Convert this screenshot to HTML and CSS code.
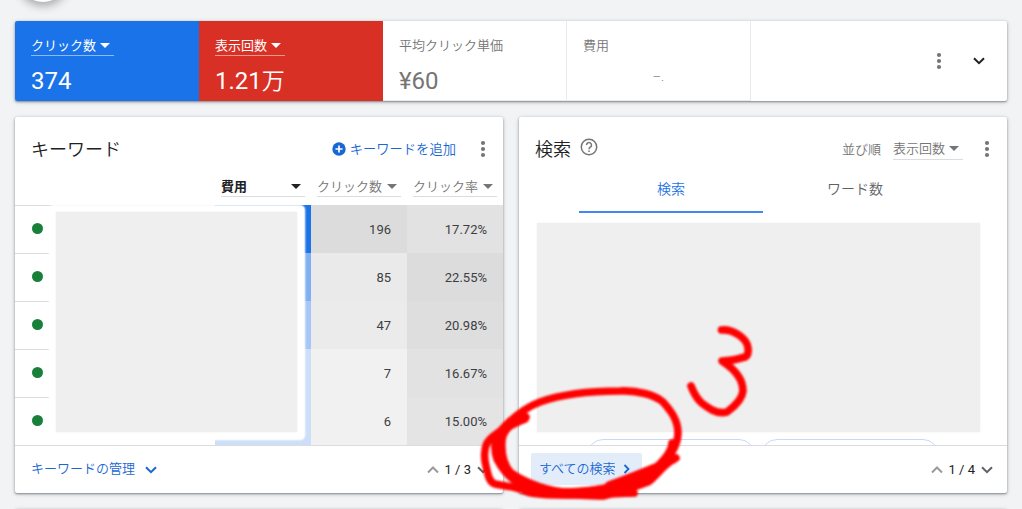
FILE: index.html
```html
<!DOCTYPE html>
<html lang="ja">
<head>
<meta charset="utf-8">
<title>キーワード</title>
<link rel="stylesheet" href="styles.css">
</head>
<body>
<svg class="defs" width="0" height="0">
  <symbol id="dots" viewBox="0 0 6 18"><circle cx="3" cy="3" r="2.1"/><circle cx="3" cy="9" r="2.1"/><circle cx="3" cy="15" r="2.1"/></symbol>
  <symbol id="down" viewBox="0 0 12 8"><path d="M1 1.2 6 6.2 11 1.2"/></symbol>
  <symbol id="up" viewBox="0 0 12 8"><path d="M1 6.5 6 1.5 11 6.5"/></symbol>
</svg>
<div class="page">
  <div class="fab"></div>
  <section class="summary">
    <div class="metric blue"><span class="label drop">クリック数<i class="tri"></i></span><span class="value">374</span></div>
    <div class="metric red"><span class="label drop">表示回数<i class="tri"></i></span><span class="value">1.21<span class="man">万</span></span></div>
    <div class="metric plain"><span class="label">平均クリック単価</span><span class="value">¥60</span></div>
    <div class="metric plain"><span class="label">費用</span><span class="dash">–.</span></div>
    <div class="tools"><svg class="dots"><use href="#dots"/></svg><svg class="chev dark"><use href="#down"/></svg></div>
  </section>
  <main class="cards">
    <section class="card">
      <header class="head">
        <h2 class="title">キーワード</h2>
        <a class="add"><svg class="plus" viewBox="0 0 14 14"><circle cx="7" cy="7" r="6.7"/><path d="M7 3.5v7M3.5 7h7"/></svg>キーワードを追加</a>
        <svg class="dots"><use href="#dots"/></svg>
      </header>
      <div class="cols">
        <span class="col strong">費用<i class="tri"></i></span>
        <span class="col">クリック数<i class="tri"></i></span>
        <span class="col">クリック率<i class="tri"></i></span>
      </div>
      <div class="table">
        <div class="row"><div class="status"><i></i></div><div class="c1"></div><div class="num a1">196</div><div class="num b1">17.72%</div></div>
        <div class="row"><div class="status"><i></i></div><div class="c2"></div><div class="num a2">85</div><div class="num b2">22.55%</div></div>
        <div class="row"><div class="status"><i></i></div><div class="c3"></div><div class="num a3">47</div><div class="num b3">20.98%</div></div>
        <div class="row"><div class="status"><i></i></div><div class="c4"></div><div class="num a4">7</div><div class="num b4">16.67%</div></div>
        <div class="row"><div class="status"><i></i></div><div class="c4"></div><div class="num a4">6</div><div class="num b5">15.00%</div></div>
        <div class="halo"></div>
        <div class="mask"></div>
      </div>
      <footer class="foot">
        <a class="manage">キーワードの管理<svg class="chev link"><use href="#down"/></svg></a>
        <div class="pager"><svg class="chev dim"><use href="#up"/></svg><span>1 / 3</span><svg class="chev mid"><use href="#down"/></svg></div>
      </footer>
    </section>
    <section class="card">
      <header class="head">
        <h2 class="title">検索</h2>
        <svg class="help" viewBox="0 0 18 18"><circle cx="9" cy="9" r="7.7"/><path d="M6.5 7.1a2.5 2.5 0 1 1 3.8 2.1C9.4 9.8 9 10.200 9 11.300M9 12.500v1.500"/></svg>
        <span class="order">並び順</span>
        <span class="col sort">表示回数<i class="tri"></i></span>
        <svg class="dots"><use href="#dots"/></svg>
      </header>
      <nav class="tabs"><a class="tab on">検索</a><a class="tab">ワード数</a></nav>
      <div class="cloud">
        <div class="blank"></div>
        <div class="pills"><i class="pill first"></i><i class="pill"></i></div>
      </div>
      <footer class="foot">
        <a class="all">すべての検索<svg class="next" viewBox="0 0 8 12"><path d="M1.500 2 5.500 6l-4 4"/></svg></a>
        <div class="pager"><svg class="chev dim"><use href="#up"/></svg><span>1 / 4</span><svg class="chev mid"><use href="#down"/></svg></div>
      </footer>
    </section>
    <section class="card"></section>
    <section class="card"></section>
  </main>
  <svg class="ink" viewBox="0 0 1022 509">
    <path d="M721.500 330C733 329 747 338 748 348Q749 357 743 357.500C735 360 729 361 722 361C736 370 743 381 743 391Q742 401 727 412Q720 414 712 410C702 404 697 401 691 386"/>
    <path d="M525 419C514 424 494 432 487 443C484 449 484 459 486 466C488 475 489 482 495 484C508 487 516 486 525 491C536 497 580 495 634 493"/>
    <path d="M676 458C663 464 656 477 648 482C630 489 617 492 603 496C570 495 545 495 530 489C512 482 503 471 497 459C493 447 495 435 505 426C515 416 526 407 540 402C562 394 590 391 620 391C637 390 655 395 663 402C671 411 678 420 678 433C678 441 675 447 672 452C667 462 656 470 645 475C630 483 600 491 573 492C550 493 526 483 511 473C503 464 501 452 502 440C503 430 511 423 526 417"/>
    <path d="M672 443C672 452 660 466 647 474M673 460C660 465 630 478 609 485M536 489C560 495 595 492 640 481"/>
  </svg>
</div>
</body>
</html>
```
FILE: styles.css
```css
* { box-sizing: border-box; }
body { margin: 0; background: #f1f3f4; color: #202124; font: 350 13px/16px Roboto, "Noto Sans CJK JP", sans-serif; overflow: hidden; }
.defs { position: absolute; }
.page { position: relative; width: 1022px; height: 509px; padding: 21px 15px 0; overflow: hidden; }
.fab { position: absolute; left: 19px; top: -46px; width: 48px; height: 48px; border-radius: 50%; background: #fff; box-shadow: 0 2px 8px 2px rgba(60,64,67,.4); }

.summary, .card { background: #fff; border-radius: 2px; box-shadow: 0 1px 2px rgba(60,64,67,.5), 0 1px 4px rgba(60,64,67,.25); }
.summary { display: flex; height: 80px; }
.metric { display: flex; flex-direction: column; align-items: flex-start; width: 184px; padding: 17px 16px 0; }
.blue { background: #1a73e8; color: #fff; border-radius: 2px 0 0 2px; }
.red { background: #d93025; color: #fff; }
.plain { color: #757575; border-right: 1px solid #e8eaed; border-bottom: 1px solid #e8eaed; }
.label { height: 18px; font-weight: 400; }
.plain .label { font-weight: 350; }
.drop { border-bottom: 1px solid rgba(255,255,255,.5); padding-right: 4px; }
.value { margin-top: 13px; font-size: 24px; line-height: 24px; font-weight: 400; }
.man { font-weight: 350; font-size: 23px; }
.dash { align-self: flex-end; margin: 13px 70px 0 0; line-height: 16px; }
.tri { display: inline-block; margin-left: 4px; border: 5px solid transparent; border-top-color: currentColor; border-bottom: 0; vertical-align: 2px; }
.tools { flex: 1; display: flex; align-items: center; justify-content: flex-end; gap: 31px; padding-right: 22px; }
.dots { width: 6px; height: 18px; fill: #757575; }
.chev { width: 12px; height: 8px; fill: none; stroke-width: 2; }
.dark { stroke: #202124; }
.link { stroke: #1967d2; }
.dim { stroke: #9a9a9a; }
.mid { stroke: #5f6368; }

.cards { display: grid; grid-template-columns: 488px 488px; grid-template-rows: 376px 376px; gap: 16px; margin-top: 16px; }
.card { display: flex; flex-direction: column; }
.head { display: flex; align-items: center; height: 64px; padding: 0 17px 0 16px; }
.title { margin: 1px 0 0; font-size: 18px; line-height: 24px; font-weight: 350; }
.add { display: flex; align-items: center; gap: 4px; margin: 1px 24px 0 auto; color: #1967d2; font-size: 13.300px; }
.plus { width: 14px; height: 14px; margin-top: -1px; fill: #1967d2; stroke: #fff; stroke-width: 1.700; }
.plus circle { stroke: none; }
.cols { display: flex; justify-content: flex-end; gap: 12px; height: 24px; padding-right: 6px; margin-top: -4px; }
.col { display: flex; justify-content: space-between; align-items: center; width: 84px; height: 20px; padding-right: 4px; color: #757575; border-bottom: 1px solid #dadce0; }
.strong { color: #202124; font-weight: 700; }
.table { position: relative; height: 240px; margin-top: 4px; }
.row { display: grid; grid-template-columns: 200px 96px 96px 96px; height: 48px; }
.status { display: flex; align-items: center; padding: 0 0 2px 17px; border-top: 1px solid #dadce0; }
.status i { width: 11px; height: 11px; border-radius: 50%; background: #188038; }
.num { display: flex; align-items: center; justify-content: flex-end; padding: 1px 16px 0 0; color: #3c4043; font-weight: 400; }
.c1 { background: #1a73e8; } .c2 { background: #80b0f3; } .c3 { background: #a4c7f6; } .c4 { background: #cbdff9; }
.a1 { background: #dcdcdc; } .a2 { background: #eaeaea; } .a3 { background: #ebebeb; } .a4 { background: #f1f1f1; }
.b1 { background: #e2e2e2; } .b2 { background: #dcdcdc; } .b3 { background: #dedede; } .b4 { background: #e2e2e2; } .b5 { background: #e4e4e4; }
.halo { position: absolute; left: 35px; top: 1px; width: 254px; height: 233px; background: #fff; border-radius: 4px; box-shadow: 0 0 2px 1px #fff, 0 0 3px #fff; }
.mask { position: absolute; left: 41px; top: 7px; width: 241px; height: 220px; background: #efefef; box-shadow: 0 0 2px #efefef; }
.foot { display: flex; align-items: center; justify-content: space-between; height: 48px; padding: 0 14px 0 16px; border-top: 1px solid #dadce0; }
.manage { display: flex; align-items: center; gap: 10px; margin-top: -2px; color: #1967d2; }
.link { margin-top: 2px; }
.pager { display: flex; align-items: center; gap: 6px; font-weight: 400; }

.help { width: 18px; height: 18px; margin: -5px 0 0 9px; fill: none; stroke: #757575; stroke-width: 1.500; }
.order { margin: 2px 12px 0 auto; color: #757575; }
.sort { width: 70px; height: 21px; margin-right: 21px; }
.tabs { display: flex; justify-content: center; width: 368px; height: 32px; margin-left: 60px; }
.tab { width: 184px; height: 32px; text-align: center; font-size: 14px; color: #5f6368; line-height: 16px; }
.on { color: #1a73e8; border-bottom: 2px solid #4285f4; }
.cloud { height: 232px; padding: 10px 27px 0 18px; overflow: hidden; }
.blank { height: 209px; background: #efefef; box-shadow: 0 0 2px #efefef; }
.pills { display: flex; gap: 6px; padding: 7px 0 0 50px; }
.pill { flex: none; width: 178px; height: 32px; border: 1.500px solid #c6dafc; border-radius: 16px; }
.first { width: 168px; }
.all { display: flex; align-items: center; gap: 7px; height: 32px; margin: -1px 0 0 -4px; padding: 0 11px 0 8px; background: #e3edfa; color: #1967d2; border-radius: 2px; }
.next { width: 8px; height: 12px; fill: none; stroke: #1967d2; stroke-width: 1.800; }
.ink { position: absolute; left: 0; top: 0; width: 1022px; height: 509px; fill: none; stroke: #f00; stroke-width: 7.600; stroke-linecap: round; stroke-linejoin: round; filter: blur(.8px); }
```
